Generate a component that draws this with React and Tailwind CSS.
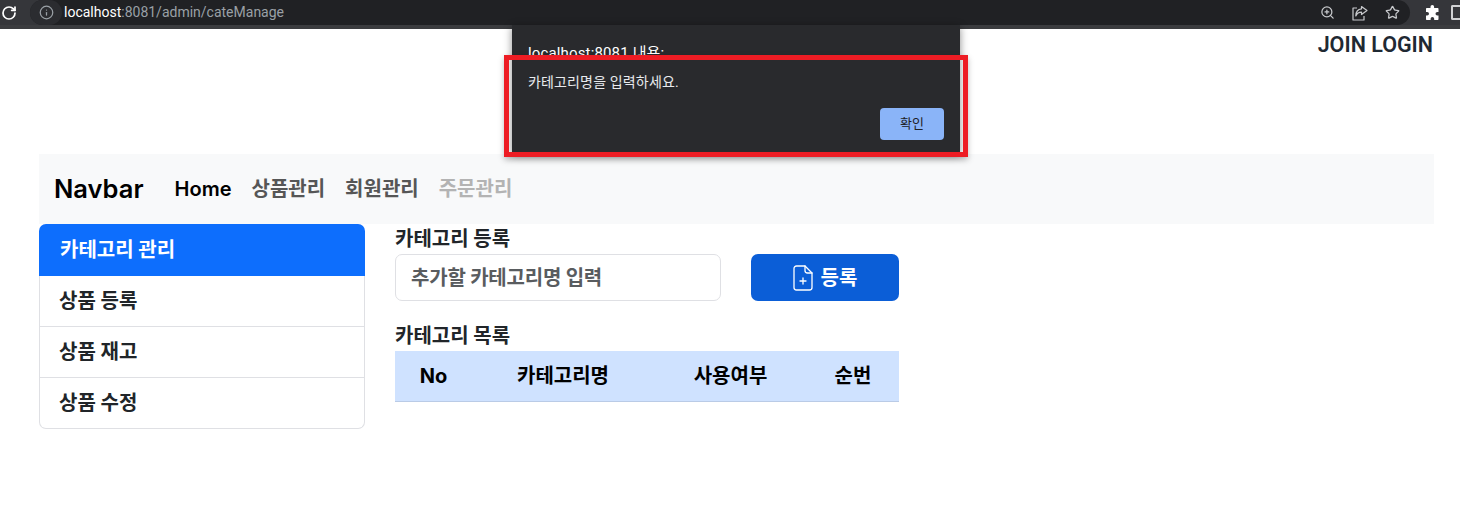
import React from "react";
import { RotateCw, Info, ZoomIn, Star } from "lucide-react";

const font = "font-['Inter','Noto_Sans_CJK_KR',sans-serif]";

function FilePlus() {
  return (
    <svg width="20" height="26" viewBox="0 0 20 26" fill="none" stroke="white" strokeWidth="1.3" strokeLinejoin="round" strokeLinecap="round">
      <path d="M3.5 1h8.5l7 7v14.500a2.500 2.500 0 0 1-2.500 2.500h-13A2.500 2.500 0 0 1 1 22.500v-19A2.500 2.500 0 0 1 3.500 1z" />
      <path d="M12 1v4.500a2.500 2.500 0 0 0 2.500 2.500H19" />
      <path d="M10 13v6M7 16h6" />
    </svg>
  );
}

function ShareIcon() {
  return (
    <svg width="16" height="16" viewBox="0 0 16 16" fill="none" stroke="#c8cacd" strokeWidth="1.2" strokeLinejoin="round">
      <path d="M5 3H1v12h11v-4" />
      <path d="M9.500 1.500 15 5.500 9.500 9.500V7.200C7 7.200 5 8.300 3.800 11c0-4 2-6.800 5.700-7.200z" />
    </svg>
  );
}

function PuzzleIcon() {
  return (
    <svg width="15" height="15" viewBox="0 0 15 15" fill="white">
      <path d="M5.500 1.800a1.800 1.800 0 0 1 3.600 0V3h3.400c.6 0 1 .4 1 1v3h-1.200a1.800 1.800 0 0 0 0 3.600H13.500v3.400c0 .6-.4 1-1 1H9.200v-1.200a1.800 1.800 0 0 0-3.600 0V15H2c-.6 0-1-.4-1-1v-3.400h1.200a1.800 1.800 0 0 0 0-3.600H1V4c0-.6.4-1 1-1h3.500z" />
    </svg>
  );
}

export default function App() {
  return (
    <div className={`relative w-[1460px] h-[515px] overflow-hidden bg-white text-[#212529] ${font}`}>
      <div className="h-[29px] bg-[#35363a] border-b-4 border-[#3b3c3f] flex items-center">
        <RotateCw size={16} strokeWidth={2.600} className="ml-[1px] text-white" />
        <div className="ml-[13px] w-[1380px] h-[25px] bg-[#202124] rounded-full flex items-center">
          <div className="w-[32px] h-[25px] rounded-full bg-[#2b2c30] flex items-center justify-center">
            <Info size={15} className="text-[#9aa0a6]" />
          </div>
          <span className="ml-[2px] text-[14px] font-['Roboto',sans-serif] text-white">localhost<span className="text-[#9aa0a6]">:8081/admin/cateManage</span></span>
          <div className="ml-auto flex items-center gap-[17px] mr-[10px] text-[#c8cacd]">
            <ZoomIn size={15} />
            <ShareIcon />
            <Star size={15} />
          </div>
        </div>
        <div className="ml-auto w-[36px] h-[25px] flex items-center justify-between pl-[1px]">
          <PuzzleIcon />
          <div className="w-[9px] h-[15px] border-2 border-[#d0d1d3] border-r-0 rounded-l-[2px]" />
        </div>
      </div>

      <div className="h-[125px] flex justify-end pr-[27px] pt-[3px]">
        <span className="text-[21.500px] leading-[26px] font-semibold font-['Roboto',sans-serif] text-[#1f2933]">JOIN LOGIN</span>
      </div>

      <div className="ml-[39px] w-[1395px] h-[70px] bg-[#f8f9fa] flex items-center pl-[15px]">
        <span className="text-[25.500px] font-semibold text-black">Navbar</span>
        <nav className="ml-[31px] flex items-center gap-[20px] text-[20px] font-semibold">
          <span className="text-black">Home</span>
          <span className="text-[#565656]">상품관리</span>
          <span className="text-[#565656]">회원관리</span>
          <span className="text-[#b3b3b3]">주문관리</span>
        </nav>
      </div>

      <div className="ml-[39px] flex items-start">
        <div className="w-[326px] text-[20px] font-bold">
          <div className="h-[52px] rounded-t-[7px] bg-[#0d6efd] text-white flex items-center pl-[21px]">카테고리 관리</div>
          <div className="border-x border-b border-[#dfe0e4] rounded-b-[7px]">
            <div className="h-[51px] border-b border-[#dfe0e4] flex items-center pl-[19px]">상품 등록</div>
            <div className="h-[51px] border-b border-[#dfe0e4] flex items-center pl-[19px]">상품 재고</div>
            <div className="h-[50px] flex items-center pl-[19px]">상품 수정</div>
          </div>
        </div>

        <div className="ml-[30px] w-[504px]">
          <div className="h-[30px] flex items-center text-[20px] font-bold">카테고리 등록</div>
          <div className="flex items-start">
            <div className="w-[326px] h-[47px] border border-[#dfe0e4] rounded-[7px] flex items-center pl-[15px] text-[20px] font-bold tracking-[-0.2px] text-[#595c5f]">추가할 카테고리명 입력</div>
            <button className="ml-[30px] w-[148px] h-[47px] bg-[#0b5ed7] rounded-[7px] flex items-center justify-center gap-[8px] text-white text-[20px] font-bold">
              <FilePlus />등록
            </button>
          </div>
          <div className="mt-[20px] h-[30px] flex items-center text-[20px] font-bold">카테고리 목록</div>
          <div className="h-[51px] bg-[#cfe2ff] border-b border-[#bacbe6] flex items-center text-[20px] font-bold text-black">
            <span className="w-[77px] text-center">No</span>
            <span className="w-[182px] text-center">카테고리명</span>
            <span className="w-[153px] text-center">사용여부</span>
            <span className="w-[92px] text-center">순번</span>
          </div>
        </div>
      </div>

      {/* alert dialog */}
      <div className="absolute left-[512px] top-[25px] w-[448px] h-[128px] bg-[#292a2d] shadow-[0_2px_8px_rgba(0,0,0,0.45)] font-['Roboto','Noto_Sans_CJK_KR',sans-serif]">
        <div className="absolute left-[16px] top-[18px] text-[15px] leading-[20px] tracking-[0.15px] text-white">localhost:8081 내용:</div>
        <div className="absolute left-[16px] top-[47px] text-[14px] leading-[20px] tracking-[0.15px] text-[#e8eaed]">카테고리명을 입력하세요.</div>
        <div className="absolute right-[16px] bottom-[13px] w-[64px] h-[32px] rounded-[4px] bg-[#8ab4f8] flex items-center justify-center text-[13px] text-[#202124]">확인</div>
      </div>
      {/* annotation */}
      <div className="absolute left-[504px] top-[55px] w-[464px] h-[102px] border-[5px] border-[#ed1c24] shadow-[0_3px_6px_rgba(0,0,0,0.25)]" />
    </div>
  );
}
